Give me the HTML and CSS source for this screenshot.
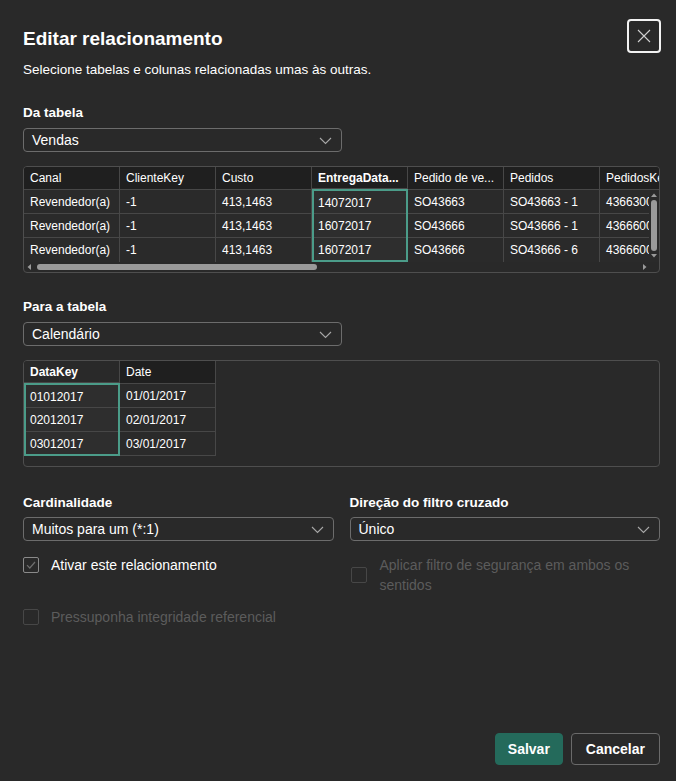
FILE: index.html
```html
<!DOCTYPE html>
<html lang="pt-BR">
<head>
<meta charset="utf-8">
<title>Editar relacionamento</title>
<link rel="stylesheet" href="styles.css">
</head>
<body>
<div class="dialog">
  <header class="head">
    <div class="head-text">
      <h1 class="title">Editar relacionamento</h1>
      <p class="subtitle">Selecione tabelas e colunas relacionadas umas às outras.</p>
    </div>
    <button class="close" aria-label="Fechar">
      <svg width="14" height="14" viewBox="0 0 14 14"><path d="M1 1L13 13M13 1L1 13" stroke="#d0d0d0" stroke-width="1.1" fill="none"/></svg>
    </button>
  </header>

  <section class="block first">
    <div class="label">Da tabela</div>
    <div class="select sel-table"><span>Vendas</span><svg class="chev" width="13" height="8" viewBox="0 0 13 8"><path d="M1 1L6.5 6.5L12 1" stroke="#a8a8a8" stroke-width="1.1" fill="none"/></svg></div>
    <div class="grid-box">
      <div class="grid-view">
        <div class="col">
          <div class="hcell">Canal</div>
          <div class="body"><div class="cell">Revendedor(a)</div><div class="cell">Revendedor(a)</div><div class="cell last">Revendedor(a)</div></div>
        </div>
        <div class="col">
          <div class="hcell">ClienteKey</div>
          <div class="body"><div class="cell">-1</div><div class="cell">-1</div><div class="cell last">-1</div></div>
        </div>
        <div class="col">
          <div class="hcell">Custo</div>
          <div class="body"><div class="cell">413,1463</div><div class="cell">413,1463</div><div class="cell last">413,1463</div></div>
        </div>
        <div class="col">
          <div class="hcell bold">EntregaData...</div>
          <div class="body sel"><div class="cell">14072017</div><div class="cell">16072017</div><div class="cell last">16072017</div></div>
        </div>
        <div class="col">
          <div class="hcell">Pedido de ve...</div>
          <div class="body"><div class="cell">SO43663</div><div class="cell">SO43666</div><div class="cell last">SO43666</div></div>
        </div>
        <div class="col">
          <div class="hcell">Pedidos</div>
          <div class="body"><div class="cell">SO43663 - 1</div><div class="cell">SO43666 - 1</div><div class="cell last">SO43666 - 6</div></div>
        </div>
        <div class="col">
          <div class="hcell">PedidosKey</div>
          <div class="body"><div class="cell">436630001</div><div class="cell">436660001</div><div class="cell last">436660006</div></div>
        </div>
        <div class="vscroll">
          <svg width="8" height="6" viewBox="0 0 8 6"><path d="M1 5L4 1.5L7 5Z" fill="#9a9a9a"/></svg>
          <div class="vthumb"></div>
          <svg width="8" height="6" viewBox="0 0 8 6"><path d="M1 1L4 4.5L7 1Z" fill="#9a9a9a"/></svg>
        </div>
      </div>
      <div class="hscroll">
        <svg width="6" height="8" viewBox="0 0 6 8"><path d="M5 1L1.5 4L5 7Z" fill="#9a9a9a"/></svg>
        <div class="hthumb"></div>
        <div class="hspace"></div>
        <svg width="6" height="8" viewBox="0 0 6 8"><path d="M1 1L4.5 4L1 7Z" fill="#9a9a9a"/></svg>
      </div>
    </div>
  </section>

  <section class="block second">
    <div class="label">Para a tabela</div>
    <div class="select sel-table"><span>Calendário</span><svg class="chev" width="13" height="8" viewBox="0 0 13 8"><path d="M1 1L6.5 6.5L12 1" stroke="#a8a8a8" stroke-width="1.1" fill="none"/></svg></div>
    <div class="grid-box">
      <div class="grid-view">
        <div class="col">
          <div class="hcell bold light">DataKey</div>
          <div class="body sel"><div class="cell">01012017</div><div class="cell">02012017</div><div class="cell last">03012017</div></div>
        </div>
        <div class="col">
          <div class="hcell">Date</div>
          <div class="body"><div class="cell">01/01/2017</div><div class="cell">02/01/2017</div><div class="cell closed">03/01/2017</div></div>
        </div>
      </div>
    </div>
  </section>

  <section class="options">
    <div class="opt-col">
      <div class="label">Cardinalidade</div>
      <div class="select"><span>Muitos para um (*:1)</span><svg class="chev" width="13" height="8" viewBox="0 0 13 8"><path d="M1 1L6.5 6.5L12 1" stroke="#a8a8a8" stroke-width="1.1" fill="none"/></svg></div>
      <label class="check">
        <span class="box checked"><svg width="14" height="14" viewBox="0 0 14 14"><path d="M3 7.2L5.8 10L11 4" stroke="#6e6e6e" stroke-width="1.2" fill="none"/></svg></span>
        <span class="check-text">Ativar este relacionamento</span>
      </label>
      <label class="check disabled spaced">
        <span class="box"></span>
        <span class="check-text">Pressuponha integridade referencial</span>
      </label>
    </div>
    <div class="opt-col">
      <div class="label">Direção do filtro cruzado</div>
      <div class="select"><span>Único</span><svg class="chev" width="13" height="8" viewBox="0 0 13 8"><path d="M1 1L6.5 6.5L12 1" stroke="#a8a8a8" stroke-width="1.1" fill="none"/></svg></div>
      <label class="check disabled">
        <span class="box"></span>
        <span class="check-text">Aplicar filtro de segurança em ambos os sentidos</span>
      </label>
    </div>
  </section>

  <footer class="foot">
    <button class="btn primary">Salvar</button>
    <button class="btn secondary">Cancelar</button>
  </footer>
</div>
</body>
</html>
```

FILE: styles.css
```css
* { box-sizing: border-box; }
html, body { margin: 0; padding: 0; }
body {
  background: #292929;
  color: #ffffff;
  font-family: "Liberation Sans", Arial, sans-serif;
  font-size: 14px;
}
.dialog {
  min-height: 781px;
  display: flex;
  flex-direction: column;
  padding: 20px 16px 16px 23px;
}
.head {
  display: flex;
  justify-content: space-between;
  align-items: flex-start;
}
.title {
  margin: 5px 0 0 0;
  font-size: 19px;
  line-height: 28px;
  font-weight: bold;
}
.subtitle {
  margin: 7px 0 0 0;
  font-size: 13.5px;
  line-height: 20px;
}
.close {
  width: 34px;
  height: 34px;
  margin: -1px -1px 0 0;
  padding: 0;
  background: #292929;
  border: 2px solid #f2f2f2;
  border-radius: 4px;
  display: flex;
  align-items: center;
  justify-content: center;
}
.label {
  font-size: 13.5px;
  font-weight: bold;
  line-height: 20px;
}
.block.first { margin-top: 23px; }
.block.second { margin-top: 24px; }
.select {
  margin-top: 5px;
  height: 24px;
  border: 1px solid #6c6c6c;
  border-radius: 4px;
  padding: 0 9px 0 8px;
  display: flex;
  align-items: center;
  justify-content: space-between;
  font-size: 14px;
}
.sel-table { width: 319px; }
.chev { margin-top: 1px; }

.grid-box {
  margin-top: 14px;
  height: 107px;
  border: 1px solid #4e4e4e;
  border-radius: 4px;
  overflow: hidden;
}
.grid-view {
  position: relative;
  display: flex;
  height: 95px;
  overflow: hidden;
}
.col {
  flex: 0 0 96px;
  width: 96px;
  display: flex;
  flex-direction: column;
}
.hcell {
  height: 23px;
  background: #1f1f1f;
  border-right: 1px solid #474747;
  border-bottom: 1px solid #474747;
  padding: 0 6px;
  font-size: 12px;
  line-height: 22px;
  white-space: nowrap;
  overflow: hidden;
}
.hcell.bold { font-weight: bold; }
.hcell.light { background: #292929; }
.body { display: flex; flex-direction: column; }
.cell {
  height: 24px;
  background: #2a2a2a;
  border-right: 1px solid #474747;
  border-bottom: 1px solid #474747;
  padding: 1px 6px 0;
  font-size: 12px;
  line-height: 22px;
  white-space: nowrap;
  overflow: hidden;
}
.cell.last { border-bottom: none; }
.body.sel {
  border: 2px solid #4b9c89;
  background: #2e2e2e;
}
.body.sel .cell {
  background: #2e2e2e;
  border-right: none;
  padding: 2px 4px 0;
}
.body.sel .cell:first-child { height: 23px; line-height: 20px; }
.body.sel .cell:nth-child(2) { height: 24px; line-height: 21px; }
.body.sel .cell.last { height: 22px; line-height: 20px; }

.vscroll {
  position: absolute;
  right: 0;
  top: 23px;
  width: 10px;
  height: 72px;
  background: #2a2a2a;
  display: flex;
  flex-direction: column;
  align-items: center;
  padding: 2px 0 3px;
  gap: 2px;
}
.vthumb {
  flex: 1;
  width: 6px;
  border-radius: 3px;
  background: #9a9a9a;
}
.hscroll {
  height: 10px;
  display: flex;
  align-items: center;
  padding: 0 11px 0 2px;
  gap: 5px;
}
.hthumb {
  width: 280px;
  height: 6px;
  border-radius: 3px;
  background: #9a9a9a;
}
.hspace { flex: 1; }

.options {
  margin-top: 26px;
  display: grid;
  grid-template-columns: 1fr 1fr;
  column-gap: 16px;
}
.opt-col { display: flex; flex-direction: column; }
.opt-col .select { margin-top: 4px; }
.check {
  margin-top: 14px;
  display: flex;
  align-items: center;
  gap: 12px;
  font-size: 14px;
  line-height: 20px;
}
.opt-col:last-child .check { gap: 13px; margin-left: 1px; }
.check.spaced { margin-top: 32px; }
.box {
  flex: 0 0 16px;
  width: 16px;
  height: 16px;
  border: 1px solid #474747;
  border-radius: 2px;
  display: flex;
  align-items: center;
  justify-content: center;
}
.box.checked { border-color: #8a8a8a; }
.check.disabled .check-text { color: #5c5c5c; }

.foot {
  margin-top: auto;
  display: flex;
  justify-content: flex-end;
  gap: 8px;
}
.btn {
  height: 32px;
  border-radius: 4px;
  font-family: "Liberation Sans", Arial, sans-serif;
  font-size: 14px;
  font-weight: bold;
  color: #ffffff;
}
.btn.primary {
  padding: 0 12px;
  background: #246a5b;
  border: 1px solid #246a5b;
}
.btn.secondary {
  padding: 0 14px;
  background: #292929;
  border: 1px solid #6a6a6a;
}
```
